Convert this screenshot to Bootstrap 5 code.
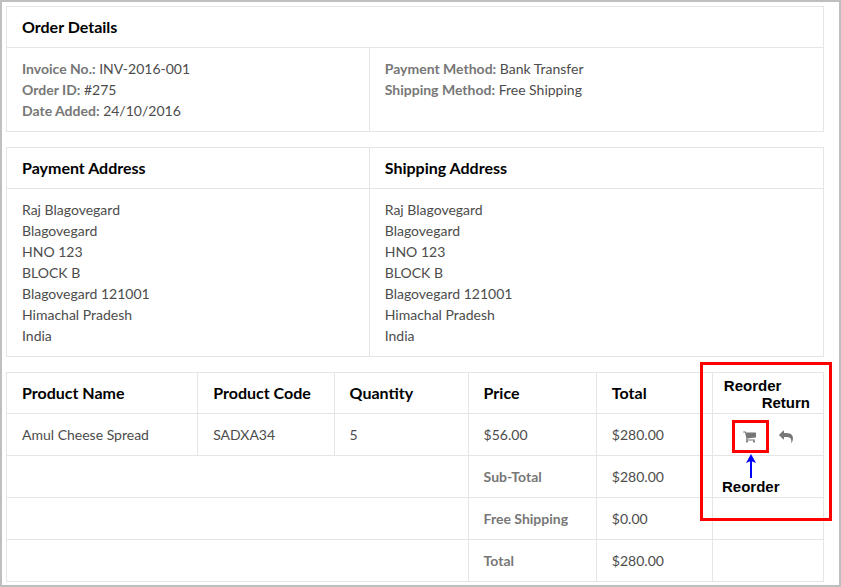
<!DOCTYPE html>
<html lang="en">
<head>
<meta charset="utf-8">
<meta name="viewport" content="width=device-width, initial-scale=1">
<title>Order Details</title>
<link rel="stylesheet" href="https://cdn.jsdelivr.net/npm/bootstrap@5.3.0/dist/css/bootstrap.min.css">
<style>
  body { font-family: Lato, "Liberation Sans", sans-serif; font-size: 14px; line-height: 21px; color: #4c4c4c; }
  .page-frame { border: 2px solid #bfbfbf; padding: 4px 15px 3px 4px; min-height: 100vh; }
  .order-table { margin-bottom: 15px; color: inherit; border-color: #e5e5e5; table-layout: fixed; }
  .order-table > :not(caption) > * > * { padding: 10px 15px; color: inherit; }
  .order-table > thead > tr > th { font-size: 16px; line-height: 20px; font-weight: 700; color: #000; }
  .order-table b { color: #777; }
  .order-table address { margin: 0; line-height: 21px; }
  .items-table { margin-bottom: 0; }
  .col-half { width: 44.4%; }
  .col-name { width: 23.4%; }
  .col-code { width: 16.7%; }
  .col-qty { width: 16.4%; }
  .col-price { width: 15.7%; }
  .col-total { width: 14.2%; }
  .note-text { font-family: "Liberation Sans", Arial, sans-serif; font-size: 15px; font-weight: 700; line-height: 17px; color: #000; }
  .order-table > thead > tr > th.note-head { font-size: 15px; line-height: 17px; padding: 4px 13px 2px 11px; }
  .order-table > tbody > tr > td.action-cell { padding: 6px 0 2px 19px; }
  .action-list { gap: 10px; }
  .action-btn { background: none; border: 0; padding: 0; color: #777; display: flex; align-items: center; justify-content: center; }
  .action-btn svg { width: 14px; height: 14px; fill: currentColor; display: block; }
  .marked { width: 37px; height: 33px; border: 3px solid #f00; }
  .note-frame { top: -10px; right: -8px; width: 132px; height: 159px; border: 3px solid #f00; pointer-events: none; padding: 89px 0 0 19px; }
  .note-arrow { width: 12px; height: 24px; display: block; margin-left: 23px; }
</style>
<script src="https://cdn.jsdelivr.net/npm/bootstrap@5.3.0/dist/js/bootstrap.bundle.min.js"></script>
</head>
<body>
<main class="page-frame">
  <table class="table table-bordered order-table">
    <colgroup><col class="col-half"><col></colgroup>
    <thead><tr><th colspan="2">Order Details</th></tr></thead>
    <tbody>
      <tr>
        <td><b>Invoice No.:</b> INV-2016-001<br><b>Order ID:</b> #275<br><b>Date Added:</b> 24/10/2016</td>
        <td><b>Payment Method:</b> Bank Transfer<br><b>Shipping Method:</b> Free Shipping</td>
      </tr>
    </tbody>
  </table>

  <table class="table table-bordered order-table">
    <colgroup><col class="col-half"><col></colgroup>
    <thead><tr><th>Payment Address</th><th>Shipping Address</th></tr></thead>
    <tbody>
      <tr>
        <td><address>Raj Blagovegard<br>Blagovegard<br>HNO 123<br>BLOCK B<br>Blagovegard 121001<br>Himachal Pradesh<br>India</address></td>
        <td><address>Raj Blagovegard<br>Blagovegard<br>HNO 123<br>BLOCK B<br>Blagovegard 121001<br>Himachal Pradesh<br>India</address></td>
      </tr>
    </tbody>
  </table>

  <div class="position-relative">
    <table class="table table-bordered order-table items-table">
      <colgroup><col class="col-name"><col class="col-code"><col class="col-qty"><col class="col-price"><col class="col-total"><col></colgroup>
      <thead>
        <tr>
          <th>Product Name</th><th>Product Code</th><th>Quantity</th><th>Price</th><th>Total</th>
          <th class="note-text note-head"><div>Reorder</div><div class="text-end">Return</div></th>
        </tr>
      </thead>
      <tbody>
        <tr>
          <td>Amul Cheese Spread</td><td>SADXA34</td><td>5</td><td>$56.00</td><td>$280.00</td>
          <td class="action-cell">
            <div class="d-flex action-list">
              <button type="button" class="action-btn marked" aria-label="Reorder"><svg viewBox="0 64 1792 1792" aria-hidden="true"><path d="M640 1536q0 52-38 90t-90 38-90-38-38-90 38-90 90-38 90 38 38 90zm896 0q0 52-38 90t-90 38-90-38-38-90 38-90 90-38 90 38 38 90zm128-1088v512q0 24-16.5 42.5t-40.5 21.5l-1044 122q13 60 13 70 0 16-24 64h920q26 0 45 19t19 45-19 45-45 19h-1024q-26 0-45-19t-19-45q0-11 8-31.5t16-36 21.5-40 15.5-29.5l-177-823h-204q-26 0-45-19t-19-45 19-45 45-19h256q16 0 28.5 6.5t19.5 15.5 13 24.5 8 26 5.5 29.5 4.5 26h1201q26 0 45 19t19 45z"/></svg></button>
              <button type="button" class="action-btn" aria-label="Return"><svg viewBox="0 0 1792 1792" aria-hidden="true"><path d="M1792 1120q0 166-127 451-3 7-10.500 24t-13.500 30-13 22q-12 17-28 17-15 0-23.500-10t-8.500-25q0-9 2.500-26.500t2.500-23.500q5-68 5-123 0-101-17.500-181t-48.500-138.500-80-101-105.500-69.500-133-42.500-154-21.500-175.500-6h-224v256q0 26-19 45t-45 19-45-19l-512-512q-19-19-19-45t19-45l512-512q19-19 45-19t45 19 19 45v256h224q713 0 875 403 53 134 53 333z"/></svg></button>
            </div>
          </td>
        </tr>
        <tr><td colspan="3"></td><td><b>Sub-Total</b></td><td>$280.00</td><td></td></tr>
        <tr><td colspan="3"></td><td><b>Free Shipping</b></td><td>$0.00</td><td></td></tr>
        <tr><td colspan="3"></td><td><b>Total</b></td><td>$280.00</td><td></td></tr>
      </tbody>
    </table>
    <div class="note-frame note-text position-absolute">
      <svg class="note-arrow" viewBox="0 0 12 24" aria-hidden="true"><path d="M6 4V24" stroke="#00f" stroke-width="2" fill="none"/><path d="M6 0L11 9L6 7L1 9Z" fill="#00f"/></svg>
      Reorder
    </div>
  </div>
</main>
</body>
</html>
